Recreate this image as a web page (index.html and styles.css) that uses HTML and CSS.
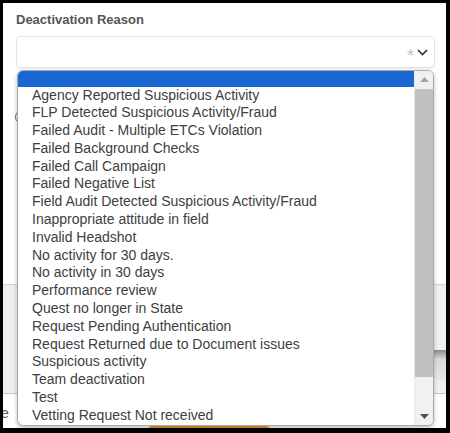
FILE: index.html
```html
<!DOCTYPE html>
<html lang="en">
<head>
    <meta charset="UTF-8">
    <meta name="viewport" content="width=device-width, initial-scale=1.0">
    <title>Deactivate Agent</title>
    <link rel="stylesheet" href="styles.css">
</head>
<body>
    <div class="frame">
        <div class="field">
            <label class="field-label">Deactivation Reason</label>
            <div class="select">
                <span class="required">*</span>
                <svg class="chevron" width="11" height="7" viewBox="0 0 11 7" fill="none" stroke="#333" stroke-width="1.7">
                    <path d="M1 1l4.5 4.5L10 1"/>
                </svg>
            </div>
        </div>

        <div class="extra">
            <span class="radio"></span>
        </div>

        <div class="footer">
            <button class="ghost-btn">Notes</button>
        </div>

        <div class="actions">
            <span class="cancel">Close</span>
            <button class="primary-btn"></button>
        </div>

        <!-- open listbox of the select, drawn over the form -->
        <div class="listbox">
            <ul class="options">
                <li class="option selected"></li>
                <li class="option">Agency Reported Suspicious Activity</li>
                <li class="option">FLP Detected Suspicious Activity/Fraud</li>
                <li class="option">Failed Audit - Multiple ETCs Violation</li>
                <li class="option">Failed Background Checks</li>
                <li class="option">Failed Call Campaign</li>
                <li class="option">Failed Negative List</li>
                <li class="option">Field Audit Detected Suspicious Activity/Fraud</li>
                <li class="option">Inappropriate attitude in field</li>
                <li class="option">Invalid Headshot</li>
                <li class="option">No activity for 30 days.</li>
                <li class="option">No activity in 30 days</li>
                <li class="option">Performance review</li>
                <li class="option">Quest no longer in State</li>
                <li class="option">Request Pending Authentication</li>
                <li class="option">Request Returned due to Document issues</li>
                <li class="option">Suspicious activity</li>
                <li class="option">Team deactivation</li>
                <li class="option">Test</li>
                <li class="option">Vetting Request Not received</li>
            </ul>
            <div class="scrollbar">
                <div class="scroll-btn">
                    <svg width="9" height="5" viewBox="0 0 9 5"><path d="M0 5L4.5 0 9 5z" fill="#a3a3a3"/></svg>
                </div>
                <div class="track">
                    <div class="thumb"></div>
                </div>
                <div class="scroll-btn">
                    <svg width="9" height="5" viewBox="0 0 9 5"><path d="M0 0L4.5 5 9 0z" fill="#505050"/></svg>
                </div>
            </div>
        </div>
    </div>
</body>
</html>
```

FILE: styles.css
```css
* {
    margin: 0;
    padding: 0;
    box-sizing: border-box;
}

body {
    font-family: 'Liberation Sans', Arial, sans-serif;
    background: #fff;
}

.frame {
    position: relative;
    width: 450px;
    height: 433px;
    border: 3px solid #000;
    border-right-width: 4px;
    border-bottom-width: 5px;
    overflow: hidden;
    display: flex;
    flex-direction: column;
    background: #fff;
}

.frame > div {
    flex-shrink: 0;
}

.field {
    padding: 9px 11px 0 13px;
    display: flex;
    flex-direction: column;
    gap: 8px;
}

.field-label {
    font-size: 13px;
    line-height: 16px;
    font-weight: bold;
    color: #555;
}

.select {
    height: 32px;
    border: 1px solid #e2e2e2;
    border-radius: 4px;
    box-shadow: 0 1px 2px rgba(0,0,0,0.06);
    display: flex;
    align-items: center;
    justify-content: flex-end;
    gap: 3px;
    padding-right: 6px;
}

.required {
    color: #c4c4c4;
    font-size: 18px;
    line-height: 18px;
    margin-top: 7px;
}

.chevron {
    margin-top: 1px;
}

.extra {
    height: 216px;
    padding: 42px 0 0 12px;
}

.radio {
    display: block;
    width: 14px;
    height: 14px;
    border: 1px solid #666;
    border-radius: 50%;
}

.footer {
    height: 110px;
    background: #efefef;
    border-top: 1px solid #d2d2d2;
    border-bottom: 1px solid #c6c6c6;
    display: flex;
    justify-content: flex-end;
    align-items: flex-start;
    padding-top: 65px;
}

.ghost-btn {
    width: 90px;
    height: 30px;
    border: none;
    background: linear-gradient(#8a8a8a, #d8d8d8 30%, #e8e8e8);
    font: inherit;
    color: #333;
    margin-right: -4px;
}

.actions {
    flex: 1;
    min-height: 0;
    display: flex;
    align-items: flex-start;
    overflow: hidden;
}

.cancel {
    font-size: 14px;
    color: #555;
    margin: 11px 0 0 -30px;
}

.primary-btn {
    margin: 32px 0 0 139px;
    width: 122px;
    height: 30px;
    border: none;
    border-radius: 4px;
    background: #e8962e;
}

/* native-looking listbox popup */
.listbox {
    position: absolute;
    left: 14px;
    top: 67px;
    width: 417px;
    height: 356px;
    border: 1px solid #a9a9a9;
    border-radius: 6px;
    box-shadow: 0 2px 4px rgba(0,0,0,0.25);
    background: #fff;
    display: flex;
    overflow: hidden;
}

.options {
    list-style: none;
    flex: 1;
}

.option {
    height: 17.8px;
    line-height: 17.8px;
    padding-left: 14px;
    font-size: 14px;
    color: #404040;
    white-space: nowrap;
}

.option.selected {
    height: 15.5px;
    background: #1967d2;
}

.scrollbar {
    width: 19px;
    background: #f1f1f1;
    border-left: 1px solid #e8e8e8;
    display: flex;
    flex-direction: column;
}

.scroll-btn {
    height: 17px;
    display: flex;
    align-items: center;
    justify-content: center;
}

.track {
    flex: 1;
    padding: 1px 0;
}

.thumb {
    height: 288px;
    background: #c1c1c1;
}
```
